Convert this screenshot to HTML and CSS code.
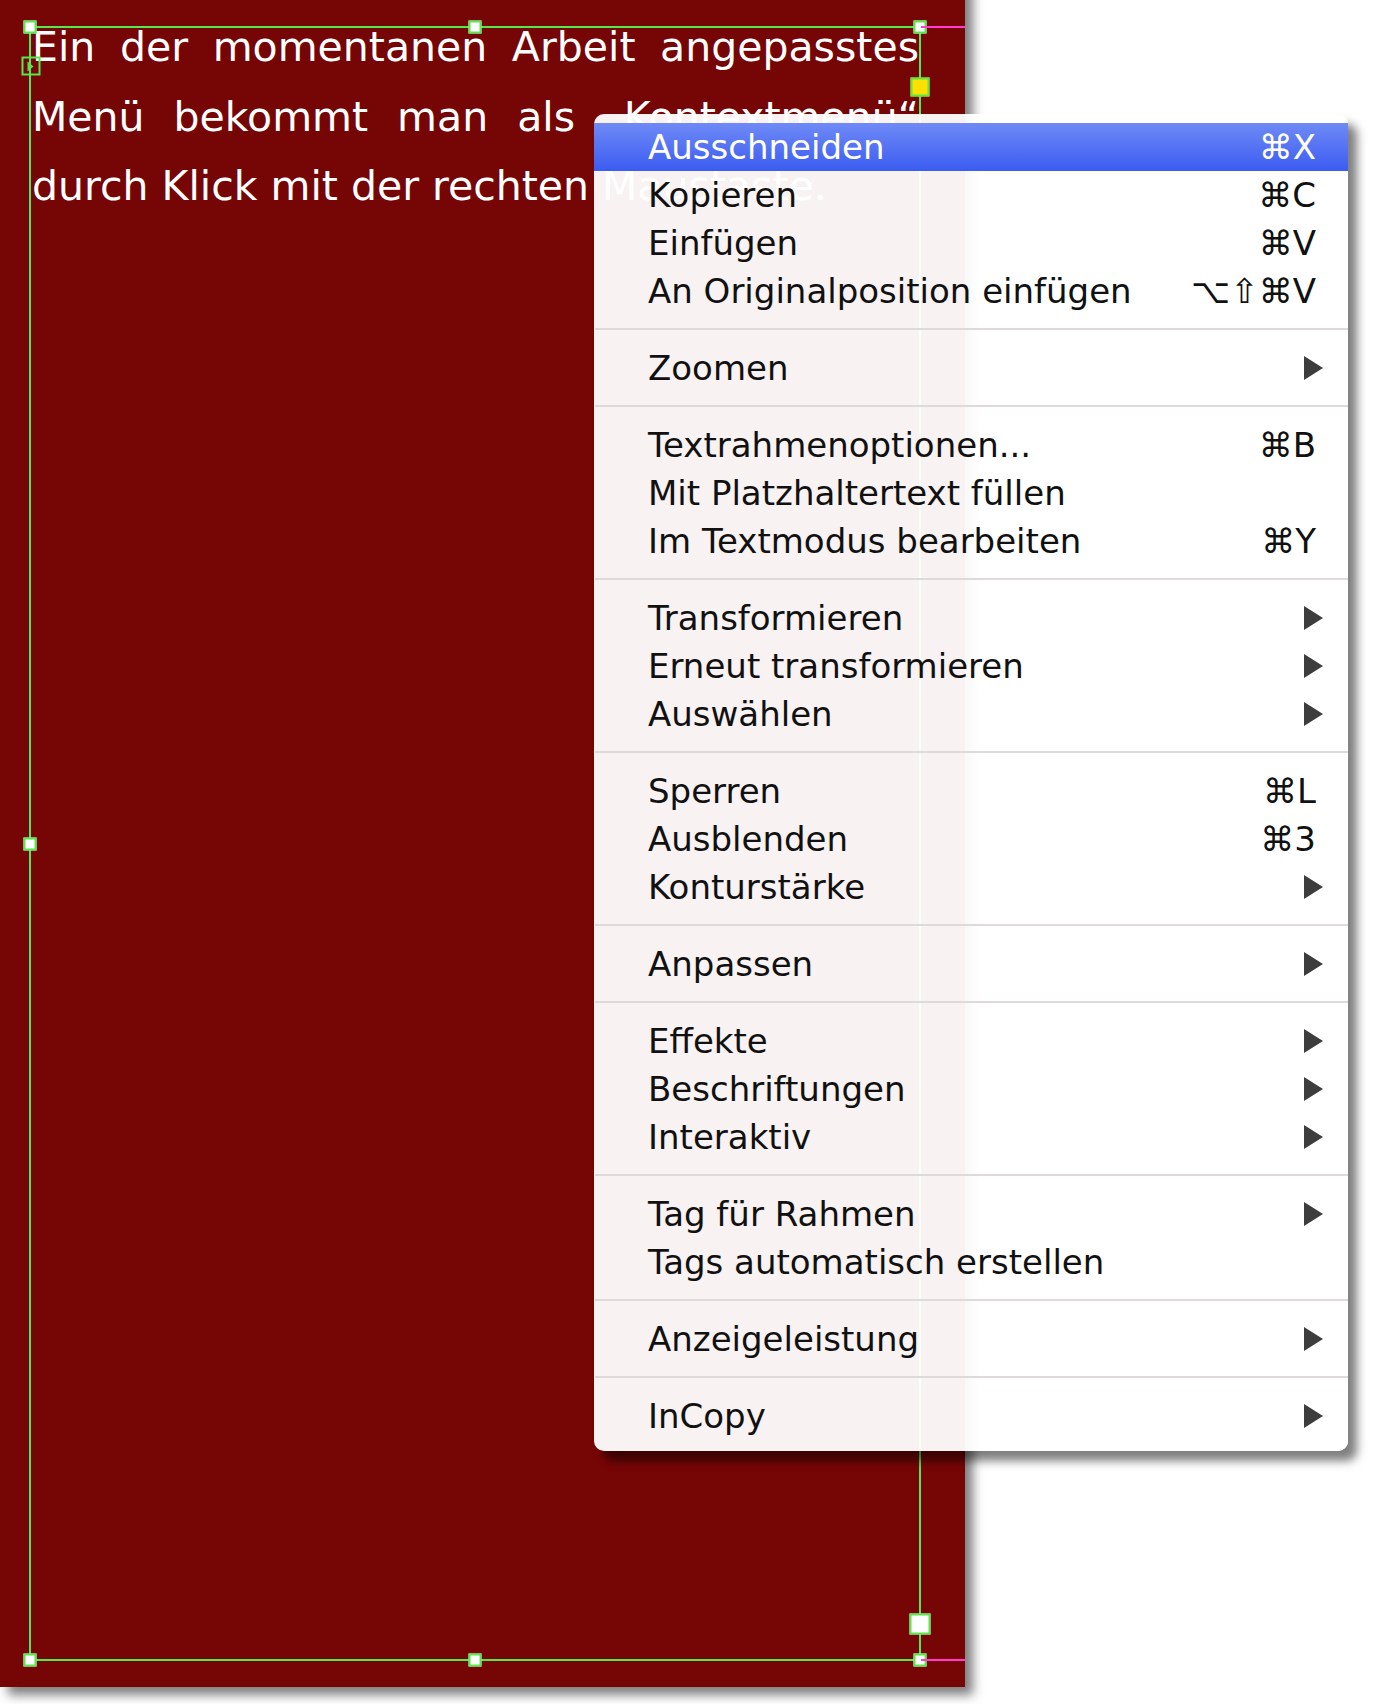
FILE: index.html
```html
<!DOCTYPE html>
<html lang="de">
<head>
    <meta charset="UTF-8">
    <title>Kontextmenü</title>
    <link rel="stylesheet" href="styles.css">
</head>
<body>
    <div class="desk">
        <!-- Seite mit Textrahmen -->
        <div class="page">
            <div class="frame">
                <p class="story">Ein der momentanen Arbeit angepasstes Menü bekommt man als „Kontextmenü“ durch Klick mit der rechten Maustaste.</p>
                <span class="handle tl"></span>
                <span class="handle tm"></span>
                <span class="handle tr"></span>
                <span class="handle ml"></span>
                <span class="handle bl"></span>
                <span class="handle bm"></span>
                <span class="handle br"></span>
                <span class="port in"></span>
                <span class="port out"></span>
                <span class="port overflow"></span>
            </div>
            <span class="bleed top"></span>
            <span class="bleed bottom"></span>
        </div>

        <!-- Kontextmenü -->
        <div class="menu">
            <div class="item active"><span>Ausschneiden</span><span class="key">⌘X</span></div>
            <div class="item"><span>Kopieren</span><span class="key">⌘C</span></div>
            <div class="item"><span>Einfügen</span><span class="key">⌘V</span></div>
            <div class="item"><span>An Originalposition einfügen</span><span class="key">⌥⇧⌘V</span></div>
            <div class="sep"></div>
            <div class="item sub"><span>Zoomen</span><span class="arrow"></span></div>
            <div class="sep"></div>
            <div class="item"><span>Textrahmenoptionen...</span><span class="key">⌘B</span></div>
            <div class="item"><span>Mit Platzhaltertext füllen</span></div>
            <div class="item"><span>Im Textmodus bearbeiten</span><span class="key">⌘Y</span></div>
            <div class="sep"></div>
            <div class="item sub"><span>Transformieren</span><span class="arrow"></span></div>
            <div class="item sub"><span>Erneut transformieren</span><span class="arrow"></span></div>
            <div class="item sub"><span>Auswählen</span><span class="arrow"></span></div>
            <div class="sep"></div>
            <div class="item"><span>Sperren</span><span class="key">⌘L</span></div>
            <div class="item"><span>Ausblenden</span><span class="key">⌘3</span></div>
            <div class="item sub"><span>Konturstärke</span><span class="arrow"></span></div>
            <div class="sep"></div>
            <div class="item sub"><span>Anpassen</span><span class="arrow"></span></div>
            <div class="sep"></div>
            <div class="item sub"><span>Effekte</span><span class="arrow"></span></div>
            <div class="item sub"><span>Beschriftungen</span><span class="arrow"></span></div>
            <div class="item sub"><span>Interaktiv</span><span class="arrow"></span></div>
            <div class="sep"></div>
            <div class="item sub"><span>Tag für Rahmen</span><span class="arrow"></span></div>
            <div class="item"><span>Tags automatisch erstellen</span></div>
            <div class="sep"></div>
            <div class="item sub"><span>Anzeigeleistung</span><span class="arrow"></span></div>
            <div class="sep"></div>
            <div class="item sub"><span>InCopy</span><span class="arrow"></span></div>
        </div>
    </div>
</body>
</html>
```

FILE: styles.css
```css
body {
    margin: 0;
    background-color: #fff;
    font-family: "DejaVu Sans", sans-serif;
}
.desk {
    position: relative;
    width: 1394px;
    height: 1704px;
    overflow: hidden;
}

/* Seite */
.page {
    position: absolute;
    left: 0;
    top: -20px;
    width: 965px;
    height: 1707px;
    background-color: #760505;
    box-shadow: 8px 8px 10px rgba(0, 0, 0, 0.5);
}
.frame {
    position: absolute;
    left: 29px;
    top: 46px;
    width: 892px;
    height: 1635px;
    box-sizing: border-box;
    border: 2px solid #56e84a;
}
.story {
    margin: -15px 0 0 1px;
    color: #fff;
    font-size: 41px;
    line-height: 69.5px;
    text-align: justify;
}
.handle, .port {
    position: absolute;
    width: 13px;
    height: 13px;
    box-sizing: border-box;
    border: 2px solid #56e84a;
    background-color: #fff;
    transform: translate(-50%, -50%);
}
.tl { left: -1px; top: -1px; }
.tm { left: 50%; top: -1px; }
.tr { left: calc(100% + 1px); top: -1px; }
.ml { left: -1px; top: 50%; }
.bl { left: -1px; top: calc(100% + 1px); }
.bm { left: 50%; top: calc(100% + 1px); }
.br { left: calc(100% + 1px); top: calc(100% + 1px); }
.port {
    width: 19px;
    height: 19px;
}
.port.in {
    left: 0;
    top: 38px;
    background-color: transparent;
}
.port.in::after {
    content: "";
    position: absolute;
    left: 4px;
    top: 3px;
    border-left: 6px solid #56e84a;
    border-top: 5px solid transparent;
    border-bottom: 5px solid transparent;
}
.port.out {
    left: calc(100% + 1px);
    top: 59px;
    background-color: #ffe000;
}
.port.overflow {
    left: calc(100% + 1px);
    top: calc(100% - 35px);
    width: 21px;
    height: 21px;
}
.bleed {
    position: absolute;
    left: 921px;
    width: 44px;
    height: 2px;
    background-color: #ff3ccf;
}
.bleed.top { top: 46px; }
.bleed.bottom { top: 1679px; }

/* Menü */
.menu {
    position: absolute;
    left: 594px;
    top: 114px;
    width: 754px;
    box-sizing: border-box;
    padding: 9px 0 11px;
    border-radius: 10px;
    background-color: rgba(255, 255, 255, 0.95);
    box-shadow: 9px 10px 10px rgba(0, 0, 0, 0.5);
    font-size: 34px;
    color: #111;
}
.item {
    display: flex;
    justify-content: space-between;
    align-items: center;
    height: 48px;
    padding: 0 32px 0 54px;
}
.item.sub {
    padding-right: 25px;
}
.item.active {
    background: linear-gradient(#6f8af6, #3b5cf1);
    color: #fff;
}
.arrow {
    width: 0;
    height: 0;
    border-left: 19px solid #3d3d3d;
    border-top: 12px solid transparent;
    border-bottom: 12px solid transparent;
}
.sep {
    height: 2px;
    margin: 13px 0 14px 1px;
    background-color: #dedada;
}
```
